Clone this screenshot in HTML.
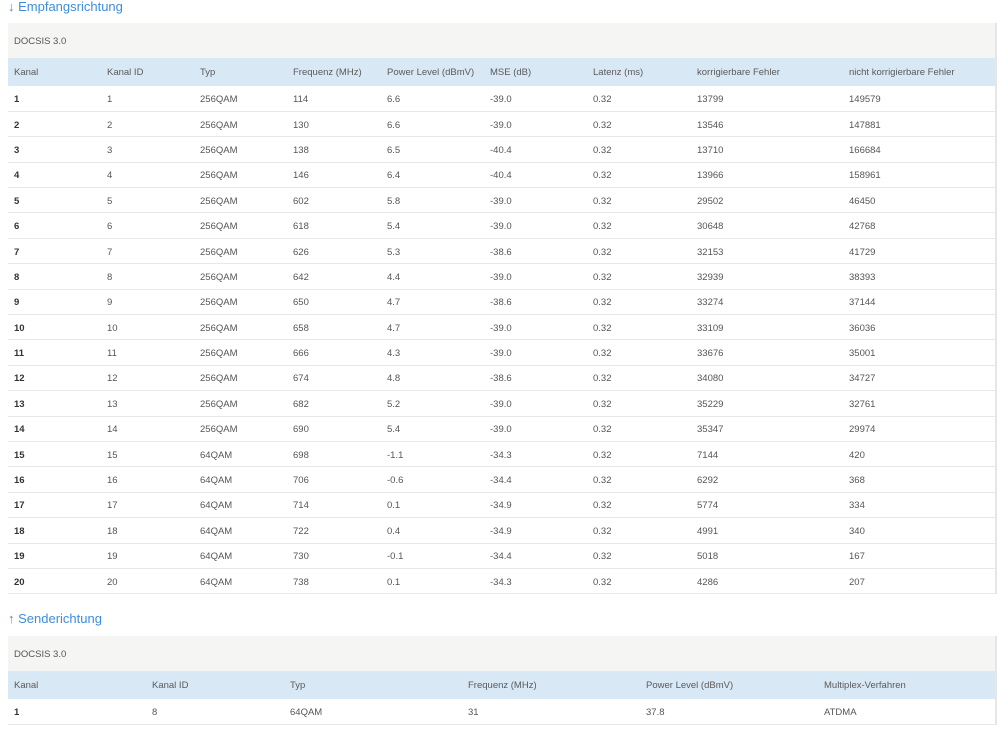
<!DOCTYPE html><html><head><meta charset="utf-8"><style>
*{margin:0;padding:0;box-sizing:border-box}
body{width:999px;height:734px;background:#fff;font-family:"Liberation Sans",sans-serif;color:#555;font-size:9.5px;overflow:hidden;position:relative}
h2{position:absolute;left:8px;font-weight:normal;font-size:13px;color:#3e8ddd}
.panel{position:absolute;left:8px;width:989px;background:#f5f5f4;border-right:2px solid #e6e6e6}
.ph{height:35px;line-height:37px;padding-left:6px;font-size:9.5px;color:#555}
table{width:100%;border-collapse:collapse;background:#fff;table-layout:fixed}
th{background:#d9e8f5;font-weight:normal;text-align:left;height:28px;padding-left:6px;padding-top:1px;color:#5a5a5a}
td{height:25.4px;padding-left:6px;padding-top:2px;border-bottom:1px solid #e8e8e8}
td:first-child{font-weight:bold;color:#333}
</style></head><body>
<h2 style="top:-1px">↓ Empfangsrichtung</h2>
<div class="panel" style="top:23px"><div class="ph">DOCSIS 3.0</div>
<table><colgroup><col style="width:93px"><col style="width:93px"><col style="width:93px"><col style="width:94px"><col style="width:103px"><col style="width:103px"><col style="width:104px"><col style="width:152px"><col></colgroup>
<tr><th>Kanal</th><th>Kanal ID</th><th>Typ</th><th>Frequenz (MHz)</th><th>Power Level (dBmV)</th><th>MSE (dB)</th><th>Latenz (ms)</th><th>korrigierbare Fehler</th><th>nicht korrigierbare Fehler</th></tr>
<tr><td>1</td><td>1</td><td>256QAM</td><td>114</td><td>6.6</td><td>-39.0</td><td>0.32</td><td>13799</td><td>149579</td></tr>
<tr><td>2</td><td>2</td><td>256QAM</td><td>130</td><td>6.6</td><td>-39.0</td><td>0.32</td><td>13546</td><td>147881</td></tr>
<tr><td>3</td><td>3</td><td>256QAM</td><td>138</td><td>6.5</td><td>-40.4</td><td>0.32</td><td>13710</td><td>166684</td></tr>
<tr><td>4</td><td>4</td><td>256QAM</td><td>146</td><td>6.4</td><td>-40.4</td><td>0.32</td><td>13966</td><td>158961</td></tr>
<tr><td>5</td><td>5</td><td>256QAM</td><td>602</td><td>5.8</td><td>-39.0</td><td>0.32</td><td>29502</td><td>46450</td></tr>
<tr><td>6</td><td>6</td><td>256QAM</td><td>618</td><td>5.4</td><td>-39.0</td><td>0.32</td><td>30648</td><td>42768</td></tr>
<tr><td>7</td><td>7</td><td>256QAM</td><td>626</td><td>5.3</td><td>-38.6</td><td>0.32</td><td>32153</td><td>41729</td></tr>
<tr><td>8</td><td>8</td><td>256QAM</td><td>642</td><td>4.4</td><td>-39.0</td><td>0.32</td><td>32939</td><td>38393</td></tr>
<tr><td>9</td><td>9</td><td>256QAM</td><td>650</td><td>4.7</td><td>-38.6</td><td>0.32</td><td>33274</td><td>37144</td></tr>
<tr><td>10</td><td>10</td><td>256QAM</td><td>658</td><td>4.7</td><td>-39.0</td><td>0.32</td><td>33109</td><td>36036</td></tr>
<tr><td>11</td><td>11</td><td>256QAM</td><td>666</td><td>4.3</td><td>-39.0</td><td>0.32</td><td>33676</td><td>35001</td></tr>
<tr><td>12</td><td>12</td><td>256QAM</td><td>674</td><td>4.8</td><td>-38.6</td><td>0.32</td><td>34080</td><td>34727</td></tr>
<tr><td>13</td><td>13</td><td>256QAM</td><td>682</td><td>5.2</td><td>-39.0</td><td>0.32</td><td>35229</td><td>32761</td></tr>
<tr><td>14</td><td>14</td><td>256QAM</td><td>690</td><td>5.4</td><td>-39.0</td><td>0.32</td><td>35347</td><td>29974</td></tr>
<tr><td>15</td><td>15</td><td>64QAM</td><td>698</td><td>-1.1</td><td>-34.3</td><td>0.32</td><td>7144</td><td>420</td></tr>
<tr><td>16</td><td>16</td><td>64QAM</td><td>706</td><td>-0.6</td><td>-34.4</td><td>0.32</td><td>6292</td><td>368</td></tr>
<tr><td>17</td><td>17</td><td>64QAM</td><td>714</td><td>0.1</td><td>-34.9</td><td>0.32</td><td>5774</td><td>334</td></tr>
<tr><td>18</td><td>18</td><td>64QAM</td><td>722</td><td>0.4</td><td>-34.9</td><td>0.32</td><td>4991</td><td>340</td></tr>
<tr><td>19</td><td>19</td><td>64QAM</td><td>730</td><td>-0.1</td><td>-34.4</td><td>0.32</td><td>5018</td><td>167</td></tr>
<tr><td>20</td><td>20</td><td>64QAM</td><td>738</td><td>0.1</td><td>-34.3</td><td>0.32</td><td>4286</td><td>207</td></tr>
</table></div>
<h2 style="top:611px">↑ Senderichtung</h2>
<div class="panel" style="top:636px"><div class="ph">DOCSIS 3.0</div>
<table><colgroup><col style="width:138px"><col style="width:138px"><col style="width:178px"><col style="width:178px"><col style="width:178px"><col></colgroup>
<tr><th>Kanal</th><th>Kanal ID</th><th>Typ</th><th>Frequenz (MHz)</th><th>Power Level (dBmV)</th><th>Multiplex-Verfahren</th></tr>
<tr><td>1</td><td>8</td><td>64QAM</td><td>31</td><td>37.8</td><td>ATDMA</td></tr>
</table></div>
</body></html>
